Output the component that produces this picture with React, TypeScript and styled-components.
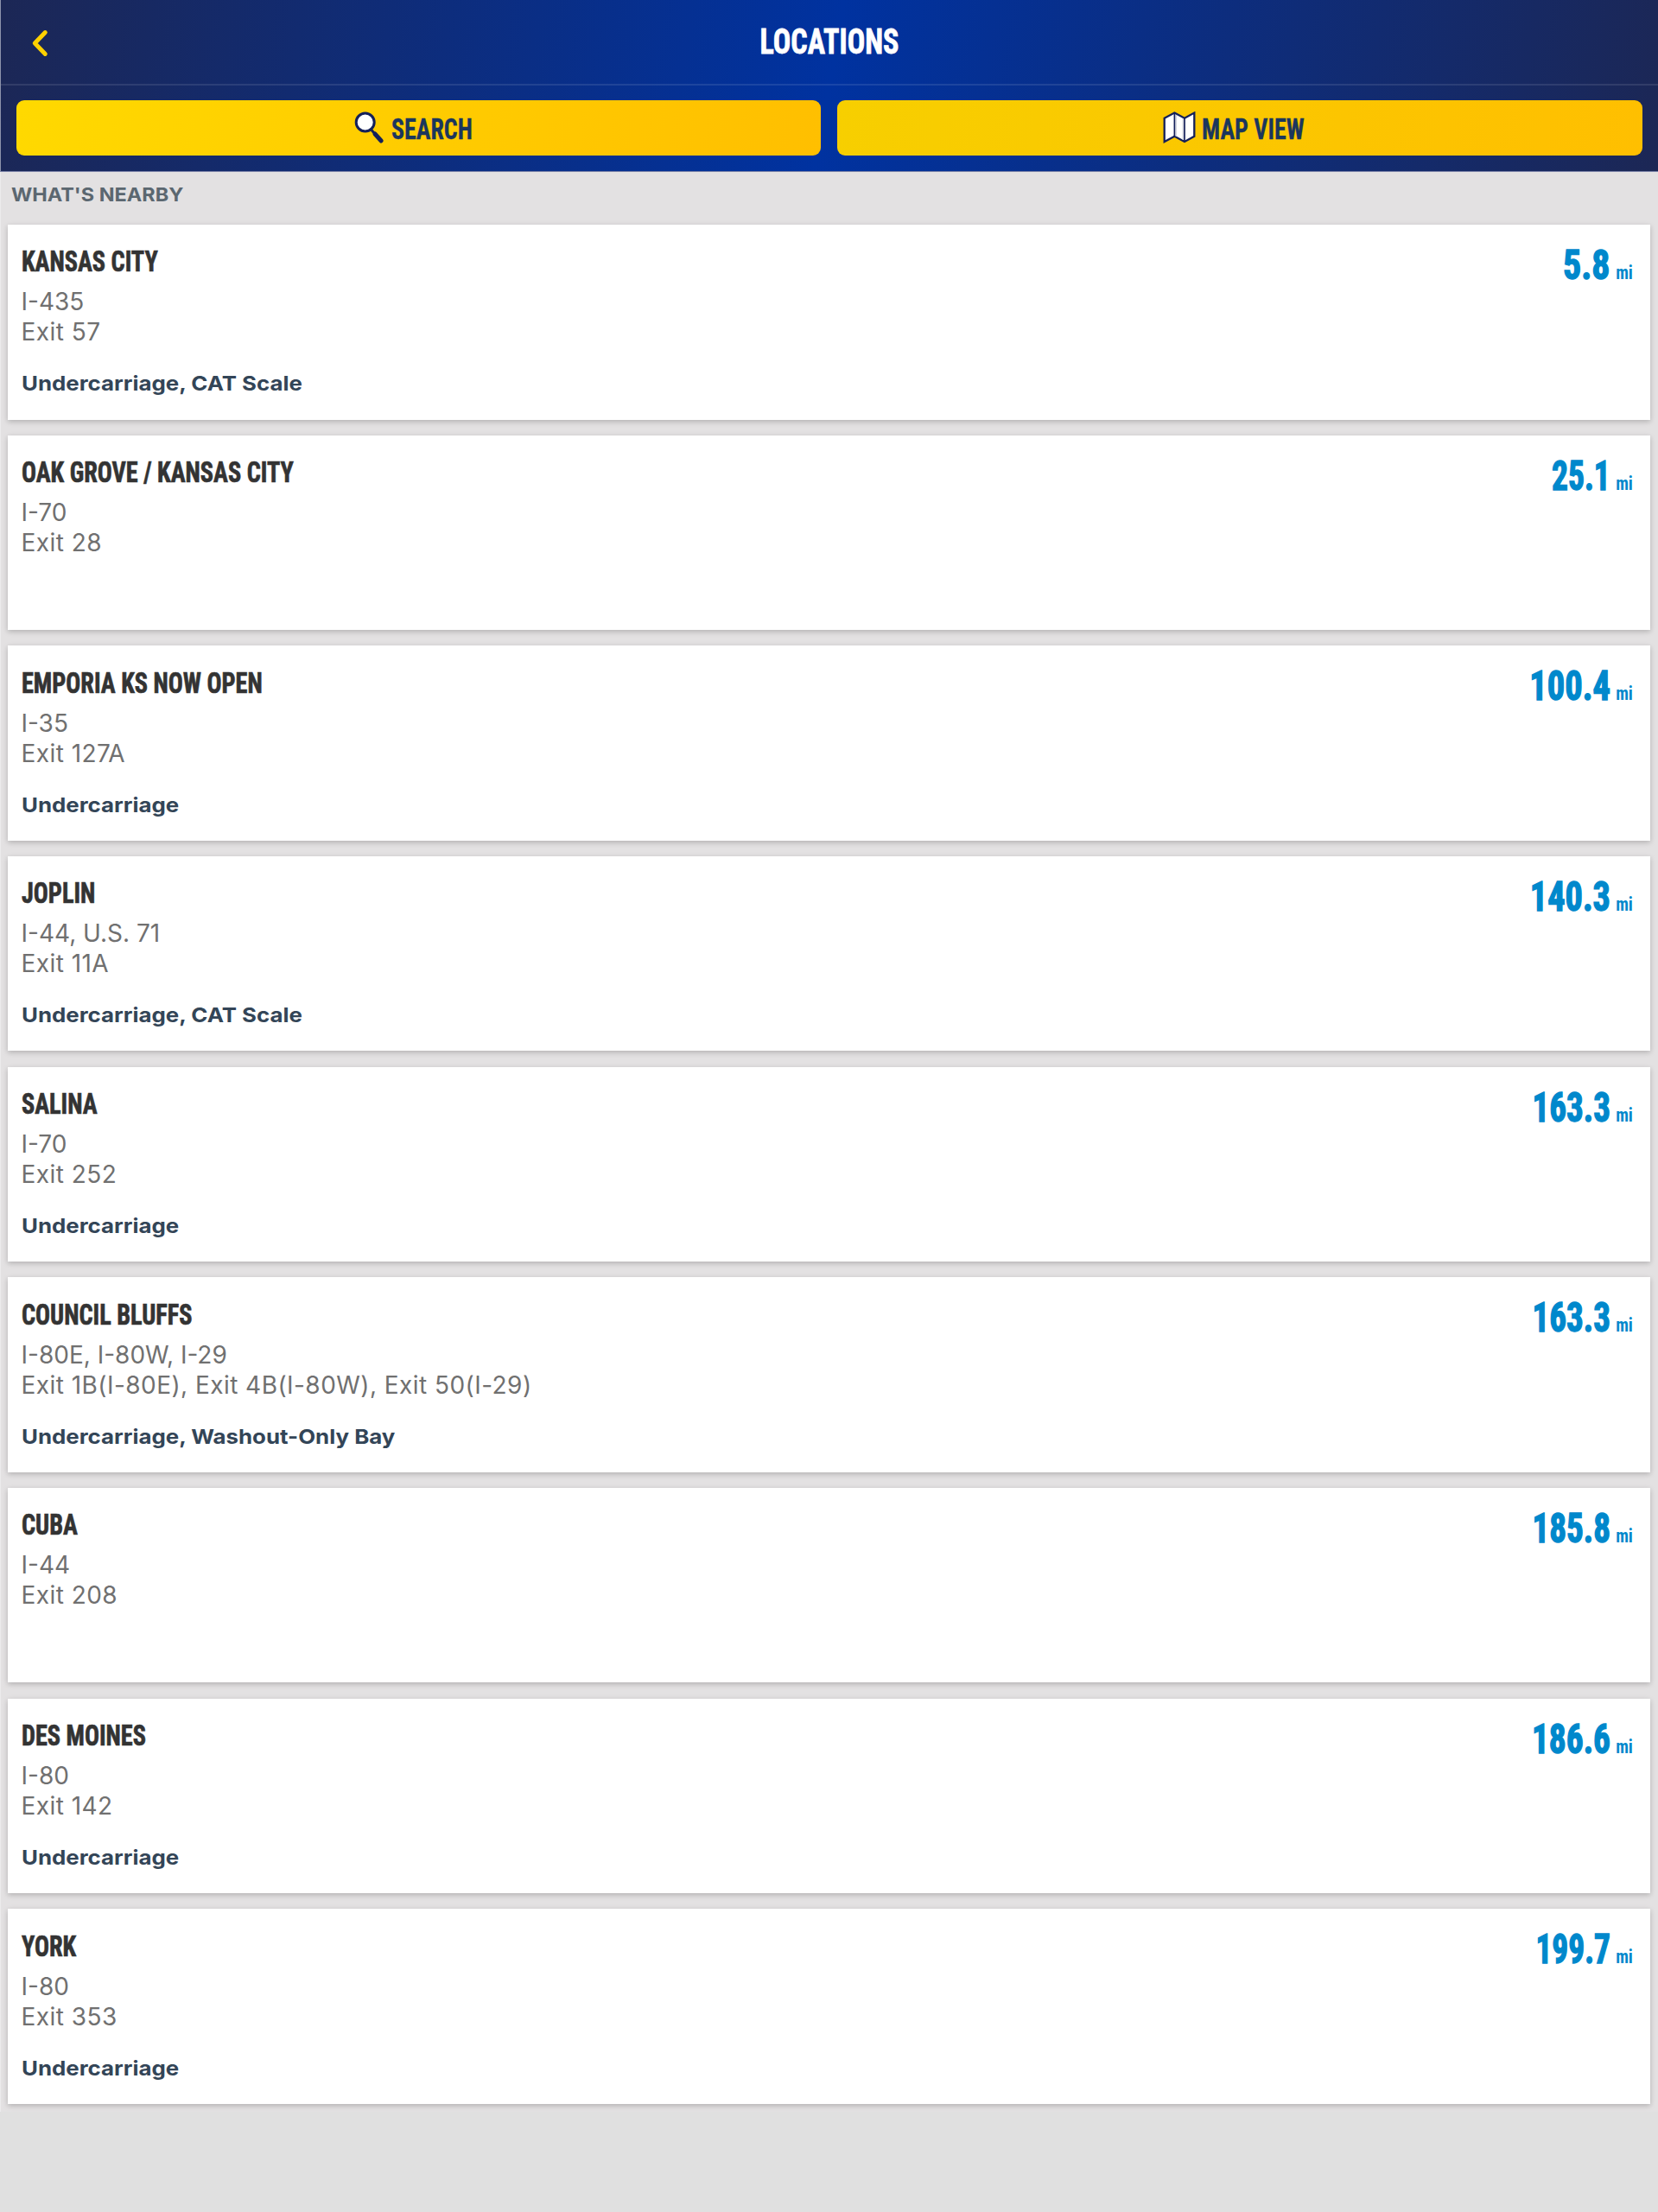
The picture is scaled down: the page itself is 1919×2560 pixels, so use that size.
import React from "react";
import styled, { createGlobalStyle } from "styled-components";

type LocationItem = {
    name: string;
    highway: string;
    exit: string;
    services?: string;
    distance: string;
    squeeze: number;
};

const locations: LocationItem[] = [
    { name: "KANSAS CITY", highway: "I-435", exit: "Exit 57", services: "Undercarriage, CAT Scale", distance: "5.8", squeeze: 0.87 },
    { name: "OAK GROVE / KANSAS CITY", highway: "I-70", exit: "Exit 28", distance: "25.1", squeeze: 0.78 },
    { name: "EMPORIA KS NOW OPEN", highway: "I-35", exit: "Exit 127A", services: "Undercarriage", distance: "100.4", squeeze: 0.845 },
    { name: "JOPLIN", highway: "I-44, U.S. 71", exit: "Exit 11A", services: "Undercarriage, CAT Scale", distance: "140.3", squeeze: 0.84 },
    { name: "SALINA", highway: "I-70", exit: "Exit 252", services: "Undercarriage", distance: "163.3", squeeze: 0.815 },
    {
        name: "COUNCIL BLUFFS",
        highway: "I-80E, I-80W, I-29",
        exit: "Exit 1B(I-80E), Exit 4B(I-80W), Exit 50(I-29)",
        services: "Undercarriage, Washout-Only Bay",
        distance: "163.3",
        squeeze: 0.815,
    },
    { name: "CUBA", highway: "I-44", exit: "Exit 208", distance: "185.8", squeeze: 0.815 },
    { name: "DES MOINES", highway: "I-80", exit: "Exit 142", services: "Undercarriage", distance: "186.6", squeeze: 0.82 },
    { name: "YORK", highway: "I-80", exit: "Exit 353", services: "Undercarriage", distance: "199.7", squeeze: 0.78 },
];

const LocationCard = (props: { data: LocationItem }) => {
    const { name, highway, exit, services, distance, squeeze } = props.data;
    return (
        <Style_card>
            <Style_info>
                <Style_name>{name}</Style_name>
                <Style_highway>{highway}</Style_highway>
                <Style_exit>{exit}</Style_exit>
                {services && <Style_services>{services}</Style_services>}
            </Style_info>
            <Style_distance>
                <Style_miles $squeeze={squeeze}>{distance}</Style_miles>
                <Style_unit>mi</Style_unit>
            </Style_distance>
        </Style_card>
    );
};

const SearchIcon = () => (
    <svg width="36" height="38" viewBox="0 0 36 38" fill="none">
        <path d="M20 21.5L24 26" stroke="#14205a" strokeWidth="3" />
        <path d="M24 26L31.2 34" stroke="#14205a" strokeWidth="5" strokeLinecap="round" />
        <circle cx="12.7" cy="12.5" r="10.5" fill="#fff" stroke="#14205a" strokeWidth="3" />
    </svg>
);

const MapIcon = () => (
    <svg width="38" height="38" viewBox="0 0 38 38" fill="none">
        <path
            d="M1.7 7.7L13.4 1.6L25 7.7L36.3 1.6V28.8L25 35L13.4 28.8L1.7 35Z"
            fill="#fff"
            stroke="#14205a"
            strokeWidth="2.3"
        />
        <path d="M15.2 4V29M23.2 8V33" stroke="#c9cbd8" strokeWidth="1.2" />
        <path d="M13.4 1.6V28.8M25 7.7V35" stroke="#14205a" strokeWidth="1.7" />
    </svg>
);

export default function App() {
    return (
        <>
            <GlobalStyle />
            <Style_header>
                <Style_titleBar>
                    <Style_back aria-label="Back">
                        <svg width="24" height="34" viewBox="0 0 24 34" fill="none">
                            <path d="M17.3 4.6L5.3 17L17.3 29.4" stroke="#ffd100" strokeWidth="5" strokeLinecap="round" strokeLinejoin="round" />
                        </svg>
                    </Style_back>
                    <Style_title>LOCATIONS</Style_title>
                </Style_titleBar>
                <Style_actions>
                    <Style_button $from="#ffd900">
                        <SearchIcon />
                        <Style_label $trim={5}>SEARCH</Style_label>
                    </Style_button>
                    <Style_button $from="#f7cf00">
                        <MapIcon />
                        <Style_label $trim={7}>MAP VIEW</Style_label>
                    </Style_button>
                </Style_actions>
            </Style_header>
            <Style_nearby>
                <Style_heading>WHAT'S NEARBY</Style_heading>
                <Style_list>
                    {locations.map((item) => (
                        <LocationCard key={item.name} data={item} />
                    ))}
                </Style_list>
            </Style_nearby>
        </>
    );
}

const GlobalStyle = createGlobalStyle`
    * {
        box-sizing: border-box;
    }
    body {
        margin: 0;
        min-height: 2560px;
        background: #e0e0e0;
        font-family: Inter, sans-serif;
    }
`;

const condensed = `"Roboto Condensed", Roboto, sans-serif`;

const Style_header = styled.header`
    height: 199px;
    border-left: 1px solid #8d93ab;
    border-bottom: 1px solid #7c83a8;
    background: linear-gradient(100deg, #1c2755 0%, #0032a0 50%, #1c2755 100%) padding-box;
`;

const Style_titleBar = styled.div`
    display: grid;
    grid-template-columns: 100px 1fr 100px;
    align-items: start;
    height: 99px;
    border-bottom: 2px solid rgba(255, 255, 255, 0.1);
`;

const Style_back = styled.button`
    display: flex;
    padding: 33px 0 0 34px;
    border: 0;
    background: none;
`;

const Style_title = styled.h1`
    margin: 0;
    color: #fff;
    font: 700 41.5px/95px ${condensed};
    text-align: center;
    transform: scaleX(0.82);
    -webkit-text-stroke: 0.8px;
`;

const Style_actions = styled.div`
    display: grid;
    grid-template-columns: 1fr 1fr;
    gap: 19px;
    padding: 17px 18px 0 17.5px;
`;

const Style_button = styled.button<{ $from: string }>`
    display: flex;
    align-items: center;
    justify-content: center;
    gap: 7.5px;
    height: 64px;
    padding: 0;
    border: 0;
    border-radius: 9px;
    background: linear-gradient(100deg, ${({ $from }) => $from}, #ffbf00);
`;

const Style_label = styled.span<{ $trim: number }>`
    margin-right: -${({ $trim }) => $trim}px;
    padding-top: 3px;
    color: #1b365d;
    font: 700 33px/64px ${condensed};
    transform: scaleX(0.845);
    transform-origin: left;
    -webkit-text-stroke: 0.3px;
`;

const Style_nearby = styled.section`
    height: 2245px;
    padding: 11px 9px 0 8px;
    border-left: 1px solid #ecebec;
    background: #e3e1e2;
`;

const Style_heading = styled.h2`
    width: fit-content;
    margin: 0 0 20px 4px;
    color: #5b6770;
    font-size: 22px;
    font-weight: 700;
    line-height: 30px;
    transform: scaleX(1.065);
    transform-origin: left;
`;

const Style_list = styled.div`
    display: flex;
    flex-direction: column;
    gap: 18.16px;
`;

const Style_card = styled.article`
    display: flex;
    justify-content: space-between;
    height: 225.5px;
    padding: 0 20px 0 15.5px;
    background: #fff;
    box-shadow: 0 2px 6px rgba(0, 0, 0, 0.22);
`;

const Style_info = styled.div`
    padding-top: 24.4px;
    white-space: nowrap;
`;

const Style_name = styled.h3`
    width: fit-content;
    margin: 0 0 12px;
    color: #333;
    font: 700 34px/36px ${condensed};
    transform: scaleX(0.83);
    transform-origin: left;
    -webkit-text-stroke: 0.7px;
`;

const Style_highway = styled.div`
    color: #707070;
    font-size: 28px;
    line-height: 35px;
`;

const Style_exit = styled(Style_highway)`
    letter-spacing: 0.45px;
`;

const Style_services = styled.div`
    width: fit-content;
    margin-top: 27px;
    color: #334557;
    font-size: 23.5px;
    font-weight: 700;
    line-height: 30px;
    transform: scaleX(1.1);
    transform-origin: left;
`;

const Style_distance = styled.div`
    display: flex;
    align-items: baseline;
    height: 48px;
    margin-top: 23px;
    color: #0088cc;
    font: 700 48px/48px ${condensed};
`;

const Style_miles = styled.span<{ $squeeze: number }>`
    margin-right: 4.5px;
    transform: scaleX(${({ $squeeze }) => $squeeze});
    transform-origin: right;
    -webkit-text-stroke: 1.4px;
`;

const Style_unit = styled.span`
    font-size: 22px;
    transform: scaleX(0.9);
    transform-origin: right;
`;
